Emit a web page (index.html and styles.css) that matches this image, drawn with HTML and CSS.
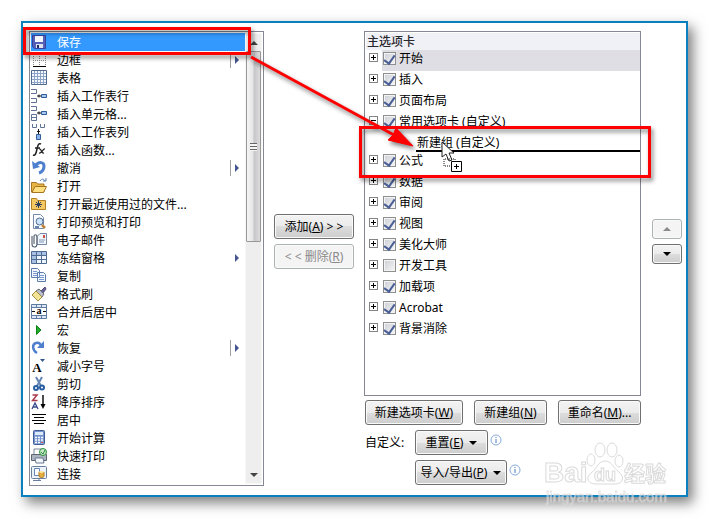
FILE: index.html
```html
<!DOCTYPE html>
<html lang="zh-CN">
  <head>
    <meta charset="UTF-8" />
    <meta name="viewport" content="width=device-width, initial-scale=1.0" />
    <title>自定义功能区</title>
    <link rel="stylesheet" href="styles.css">
  </head>
  <body>
    <main class="dialog">
      <div class="commands">
        <ul class="command-list">
          <li class="selected">
            <svg class="icon" viewBox="0 0 16 16"><path d="M1.500 1.500h13v13h-11l-2-2z" fill="#5460b8" stroke="#38429a"/><path d="M4 2h8v6H4z" fill="#f5f7ff"/><path d="M5 10h7v4H5z" fill="#dfe3ee"/><path d="M6 11h2v3H6z" fill="#222a60"/></svg>
            保存
          </li>
          <li>
            <svg class="icon" viewBox="0 0 16 16"><path d="M2 2.500h13M2 8.500h13M2.500 2v12M8.500 2v12M14.500 2v12" stroke="#8b8b8b" stroke-dasharray="1 1" fill="none"/><path d="M2 14.500h13" stroke="#000"/></svg>
            边框<span class="more split"></span>
          </li>
          <li>
            <svg class="icon" viewBox="0 0 16 16"><path d="M.5.5h15v14H.5z" fill="#f4f8ff" stroke="#50698f"/><path d="M1 3.500h14M1 6.500h14M1 9.500h14M1 12.500h14M3.500 1v13M6.500 1v13M9.500 1v13M12.500 1v13" stroke="#8da4c6"/></svg>
            表格
          </li>
          <li>
            <svg class="icon" viewBox="0 0 16 16"><path d="M0 1.500h5.500v4H0M0 10.500h5.500v4H0" fill="#fff" stroke="#607595"/><path d="M6 8h4M8 6.500v3" stroke="#111"/><path d="M10.500 6.500h5v3h-5z" fill="#a8c8f2" stroke="#315d9b"/></svg>
            插入工作表行
          </li>
          <li>
            <svg class="icon" viewBox="0 0 16 16"><path d="M0 .5h5.500v4H0M.5 8.500h5v6h-5zM.5 11.500h5" fill="#fff" stroke="#607595"/><path d="M6 7h4M8 5.500v3" stroke="#111"/><path d="M10.500 5.500h5v3h-5z" fill="#a8c8f2" stroke="#315d9b"/></svg>
            插入单元格...
          </li>
          <li>
            <svg class="icon" viewBox="0 0 16 16"><path d="M1.500 0v3.500h4V0M9.500 0v3.500h4V0" fill="#fff" stroke="#607595"/><path d="M7.500 5v5M6 7.500h3" stroke="#111"/><path d="M5.500 10.500h4v5h-4z" fill="#8bb3ea" stroke="#315d9b"/></svg>
            插入工作表列
          </li>
          <li>
            <svg class="icon" viewBox="0 0 16 16"><path d="M2 13c2 1 3-1 4-6s2-6 4-5M4 6h5" fill="none" stroke="#222" stroke-width="1.500"/><path d="M8 7c3-1 2 5 5 4M14 7c-2-1-3 5-6 4" fill="none" stroke="#222" stroke-width="1.300"/></svg>
            插入函数...
          </li>
          <li>
            <svg class="icon" viewBox="0 0 16 16"><path d="M4 6c4-5 9-4 9 0 0 3-2 6-5 7" fill="none" stroke="#4d7fce" stroke-width="3"/><path d="M1 1l1 8 7-2z" fill="#4d7fce"/></svg>
            撤消<span class="more split"></span>
          </li>
          <li>
            <svg class="icon" viewBox="0 0 16 16"><path d="M.5 14V4.500h5l1 1.500H13v8z" fill="#e9b645" stroke="#a77522"/><path d="M1 14.500l3-6h11.500l-3 6z" fill="#ffdf80" stroke="#a77522"/><path d="M9 3c2-3 4-2 5 0M12 3h3V0" fill="none" stroke="#587eae"/></svg>
            打开
          </li>
          <li>
            <svg class="icon" viewBox="0 0 16 16"><path d="M.5 13.500V2.500h5l1 2h8v9z" fill="#f5c961" stroke="#b38024"/><path d="M7.500 5v7M4 8.500h7M5 6l5 5M10 6l-5 5" stroke="#2c3d61"/></svg>
            打开最近使用过的文件...
          </li>
          <li>
            <svg class="icon" viewBox="0 0 16 16"><path d="M2.500.5h7l3 3v11h-10z" fill="#fbfcff" stroke="#7789a8"/><circle cx="8.500" cy="7.500" r="3.500" fill="#cae3f8" stroke="#516b91"/><path d="M11 11l3 3" stroke="#bb833c" stroke-width="2.500"/><path d="M4 12h4v2H4z" fill="#6685b2"/></svg>
            打印预览和打印
          </li>
          <li>
            <svg class="icon" viewBox="0 0 16 16"><path d="M6 4.500l3-3h6.500v11H6z" fill="#f0f5fc" stroke="#7487a6"/><path d="M8 8h6M8 10h5" stroke="#8297b5"/><path d="M12 3h2v3h-2z" fill="#cf5240"/><path d="M1 4v8c0 4 5 4 5 0V5c0-3-3-3-3 0v7" fill="none" stroke="#5c6879" stroke-width="1.200"/></svg>
            电子邮件
          </li>
          <li>
            <svg class="icon" viewBox="0 0 16 16"><path d="M.5 1.500h15v12H.5z" fill="#eff5ff" stroke="#506b91"/><path d="M1 2h4v11H1zM5 2h10v3H5z" fill="#a7c1e4"/><path d="M1 5.500h14M1 9.500h14M5.500 1v12M10.500 1v12" stroke="#506b91"/></svg>
            冻结窗格<span class="more"></span>
          </li>
          <li>
            <svg class="icon" viewBox="0 0 16 16"><path d="M.5.5h6l2 2v7h-8zM6.500 4.500h6l2 2v7h-8z" fill="#f1f6ff" stroke="#5c7caf"/><path d="M2 3.500h4M2 5.500h4M2 7.500h4M8 7.500h5M8 9.500h5M8 11.500h5" stroke="#7b9acb"/></svg>
            复制
          </li>
          <li>
            <svg class="icon" viewBox="0 0 16 16"><path d="M10 5l4-4 1 2-3 4z" fill="#6b619c" stroke="#514b77"/><path d="M8 3l5 5-2 3-6-6z" fill="#b8bdca" stroke="#686c79"/><path d="M5 5l6 6-4 4-6-6z" fill="#f2e494" stroke="#a28d43"/></svg>
            格式刷
          </li>
          <li>
            <svg class="icon" viewBox="0 0 16 16"><path d="M.5.5h15v14H.5zM.5 3.500h15M.5 11.500h15M5.500 0v3M10.500 0v3M5.500 12v3M10.500 12v3" fill="#dce9fa" stroke="#607aa0"/><path d="M1 4h14v7H1z" fill="#fff"/><path d="M1 7.500h3M12 7.500h3" stroke="#111"/><text x="8" y="10" text-anchor="middle" class="glyph">a</text></svg>
            合并后居中
          </li>
          <li>
            <svg class="icon" viewBox="0 0 16 16"><path d="M5.500 3.500v9l4.500-4.500z" fill="#20ae2a" stroke="#108018"/></svg>
            宏
          </li>
          <li>
            <svg class="icon" viewBox="0 0 16 16"><path d="M6 13C1 10 1 4 5 3c3-1 5 1 5 4" fill="none" stroke="#4d7fce" stroke-width="2.500"/><path d="M6 8h7V1z" fill="#4d7fce"/></svg>
            恢复<span class="more split"></span>
          </li>
          <li>
            <svg class="icon" viewBox="0 0 16 16"><text x="6" y="14" text-anchor="middle" class="glyph large">A</text><path d="M9 1h5l-2.500 3z" fill="#31558d"/></svg>
            减小字号
          </li>
          <li>
            <svg class="icon" viewBox="0 0 16 16"><path d="M5 1l5 9M11 1L6 10" stroke="#6586b4" stroke-width="2"/><circle cx="5" cy="12" r="2" fill="none" stroke="#285da2" stroke-width="2"/><circle cx="11" cy="11.500" r="2" fill="none" stroke="#285da2" stroke-width="2"/></svg>
            剪切
          </li>
          <li>
            <svg class="icon" viewBox="0 0 16 16"><path d="M1.500 1h4.500L1.500 6.500h5" fill="none" stroke="#a9384c" stroke-width="1.500"/><path d="M1 15l3-6 3 6M2 13h4" fill="none" stroke="#394c8e" stroke-width="1.300"/><path d="M12 1v11" stroke="#111" stroke-width="1.500"/><path d="M9.500 10h5l-2.500 5z"/></svg>
            降序排序
          </li>
          <li>
            <svg class="icon" viewBox="0 0 16 16"><path d="M1 2.500h14M3 5.500h10M1 8.500h14M3 11.500h10" stroke="#000"/></svg>
            居中
          </li>
          <li>
            <svg class="icon" viewBox="0 0 16 16"><rect x="2.500" y=".5" width="11" height="14" rx="1" fill="#7594ce" stroke="#405d98"/><path d="M4 2h8v3H4z" fill="#dceafa"/><path d="M4 7.500h8M4 10h8M4 12.500h8" stroke="#fff" stroke-width="1.500" stroke-dasharray="2 1"/><path d="M10 12h2v1h-2z" fill="#d34f43"/></svg>
            开始计算
          </li>
          <li>
            <svg class="icon" viewBox="0 0 16 16"><path d="M3 1h8v6H3z" fill="#fff" stroke="#7b8798"/><path d="M.5 6.500h15v6H.5z" fill="#aab3be" stroke="#5c6672"/><path d="M4 10h8l1 5H5z" fill="#f6f8fc" stroke="#657894"/><circle cx="12" cy="4" r="3.500" fill="#c5eac5" stroke="#2d8c3d"/><path d="M10 4l2 2 2-4" fill="none" stroke="#27883b"/></svg>
            快速打印
          </li>
          <li>
            <svg class="icon" viewBox="0 0 16 16"><rect x=".5" y=".5" width="15" height="12" rx="1" fill="#edf3fb" stroke="#687f9f"/><path d="M3.500 2.500h5v7h-5z" fill="#fff" stroke="#6787b9"/><path d="M8 6v4c0 2 5 2 5 0V6" fill="#e5ae40" stroke="#ad7b22"/><ellipse cx="10.500" cy="6" rx="2.500" ry="1" fill="#ffe29a"/><path d="M2 14.500h8M8 12v3" stroke="#687f9f"/></svg>
            连接
          </li>
        </ul>
        <div class="scrollbar">
          <span class="arrow up"></span>
          <span class="thumb"><i></i></span>
          <span class="arrow down"></span>
        </div>
      </div>

      <div class="transfer">
        <button type="button">添加(<u>A</u>) &gt; &gt;</button>
        <button type="button" disabled>&lt; &lt; 删除(<u>R</u>)</button>
      </div>

      <div class="ribbon">
        <div class="tree">
          <h2>主选项卡</h2>
          <ul>
            <li class="current"><span class="toggle"></span><label><input type="checkbox" checked />开始</label></li>
            <li><span class="toggle"></span><label><input type="checkbox" checked />插入</label></li>
            <li><span class="toggle"></span><label><input type="checkbox" checked />页面布局</label></li>
            <li><span class="toggle open"></span><label><input type="checkbox" checked />常用选项卡 (自定义)</label></li>
            <li class="group">新建组 (自定义)</li>
            <li><span class="toggle"></span><label><input type="checkbox" checked />公式</label></li>
            <li><span class="toggle"></span><label><input type="checkbox" checked />数据</label></li>
            <li><span class="toggle"></span><label><input type="checkbox" checked />审阅</label></li>
            <li><span class="toggle"></span><label><input type="checkbox" checked />视图</label></li>
            <li><span class="toggle"></span><label><input type="checkbox" checked />美化大师</label></li>
            <li><span class="toggle"></span><label><input type="checkbox" />开发工具</label></li>
            <li><span class="toggle"></span><label><input type="checkbox" checked />加载项</label></li>
            <li><span class="toggle"></span><label><input type="checkbox" checked />Acrobat</label></li>
            <li><span class="toggle"></span><label><input type="checkbox" checked />背景消除</label></li>
          </ul>
        </div>
        <div class="tab-buttons">
          <button type="button" class="wide">新建选项卡(<u>W</u>)</button>
          <button type="button">新建组(<u>N</u>)</button>
          <button type="button" class="medium">重命名(<u>M</u>)...</button>
        </div>
        <div class="custom">
          <span class="custom-label">自定义:</span>
          <div class="custom-row">
            <button type="button"><span>重置(<u>E</u>)</span><span class="caret"></span></button>
            <svg class="info" viewBox="0 0 12 12"><circle cx="6" cy="6" r="5" fill="#fff" stroke="#86a9dc"/><path d="M6 5v4M6 3v1" stroke="#4778bd"/></svg>
          </div>
          <div class="custom-row second">
            <button type="button" class="export"><span>导入/导出(<u>P</u>)</span><span class="caret"></span></button>
            <svg class="info" viewBox="0 0 12 12"><circle cx="6" cy="6" r="5" fill="#fff" stroke="#86a9dc"/><path d="M6 5v4M6 3v1" stroke="#4778bd"/></svg>
          </div>
        </div>
      </div>

      <div class="order">
        <button type="button" aria-label="上移" disabled><span class="caret up"></span></button>
        <button type="button" aria-label="下移"><span class="caret"></span></button>
      </div>

      <!-- drag hint: source, arrow and drop target -->
      <svg class="hint" width="640" height="170" viewBox="0 0 640 170">
        <g class="hint-lines">
          <rect x="1.500" y="5.500" width="225" height="25" />
          <rect x="337.500" y="104.500" width="289" height="49" />
          <path d="M228 34L371 112" />
          <path class="head" d="M390 123L365 117L370 112L373 105z" />
        </g>
        <path d="M419 119v15l4-3 3 7 3-1-3-7h5z" fill="#fff" stroke="#222" />
        <path d="M421 143v-7h11v7h-11" fill="none" stroke="#111" stroke-dasharray="1 1" />
        <path d="M428.500 138.500h10v10h-10z" fill="#fff" stroke="#000" />
        <path d="M431 143.500h5M433.500 141v5" stroke="#000" />
      </svg>

      <svg class="watermark" width="130" height="67" viewBox="0 0 130 67">
        <g class="mark">
          <text x="1" y="41" class="brand">Bai</text>
          <path d="M62 20c-7 0-8 8-14 12-6 5-3 11 5 11h19c8 0 10-7 4-12-6-4-7-11-14-11z" />
          <ellipse cx="48" cy="19" rx="4" ry="6" />
          <ellipse cx="57" cy="9" rx="5" ry="7" />
          <ellipse cx="69" cy="9" rx="5" ry="7" />
          <ellipse cx="76" cy="20" rx="4" ry="6" />
          <text x="51" y="40" class="du">du</text>
          <text x="81" y="40" class="cn">经验</text>
          <text x="3" y="61" class="site">jingyan.baidu.com</text>
        </g>
      </svg>
    </main>
  </body>
</html>
```
FILE: styles.css
```css
* {
  box-sizing: border-box;
}
body {
  margin: 0;
  padding: 21px;
  background-color: white;
  color: black;
  font-family: "Noto Sans", "Noto Sans CJK SC", sans-serif;
  font-size: 12px;
  line-height: 18px;
}
ul {
  list-style: none;
  margin: 0;
  padding: 0;
}
.dialog {
  position: relative;
  display: flex;
  gap: 10px;
  padding: 8px 4px 9px 6px;
  background-color: white;
  border: 2px solid #0a80c0;
  box-shadow: 5px 6px 12px rgba(0, 0, 0, 0.5);
}

/* command list */
.commands {
  display: flex;
  width: 235px;
  padding: 1px;
  border: 1px solid #858793;
}
.command-list {
  flex: 1;
  padding-bottom: 1px;
}
.command-list li {
  display: flex;
  gap: 10px;
  height: 18px;
  line-height: 20px;
}
.command-list .selected {
  background-color: #3399ff;
  color: white;
}
.icon {
  width: 16px;
  height: 16px;
  margin-top: 1px;
}
.glyph {
  font-family: "Liberation Serif", serif;
  font-size: 10px;
  font-weight: bold;
}
.glyph.large {
  font-size: 13px;
}
.more {
  display: flex;
  align-items: center;
  width: 15px;
  height: 16px;
  margin: 1px 0 0 auto;
  padding-left: 4px;
  border-left: 1px solid transparent;
}
.more.split {
  border-color: #a0a0a0;
}
.more::before {
  content: "";
  border: 4px solid transparent;
  border-left-color: #44558f;
  border-right: 0;
}
.scrollbar {
  display: flex;
  flex-direction: column;
  align-items: center;
  width: 17px;
  background-color: #eeeeee;
  border: 1px solid #f7f7f7;
}
.arrow {
  display: flex;
  align-items: center;
  justify-content: center;
  height: 17px;
}
.arrow::before {
  content: "";
  border: 4px solid transparent;
}
.arrow.up::before {
  border-top: 0;
  border-bottom-color: #444444;
}
.arrow.down {
  margin-top: auto;
}
.arrow.down::before {
  border-bottom: 0;
  border-top-color: #444444;
}
.thumb {
  display: flex;
  align-items: center;
  justify-content: center;
  width: 15px;
  height: 191px;
  border: 1px solid #979797;
  border-radius: 1px;
  background: linear-gradient(to right, #f5f5f5, #e5e5e8 45%, #c6c6ca 55%, #dcdcdc);
}
.thumb i {
  width: 7px;
  height: 8px;
  background: repeating-linear-gradient(#666666 0 1px, #f5f5f5 1px 3px);
}

/* buttons */
button {
  display: flex;
  align-items: center;
  justify-content: center;
  min-width: 73px;
  height: 25px;
  padding: 0;
  border: 1px solid #707070;
  border-radius: 3px;
  background: linear-gradient(#f3f3f3, #ebebeb 50%, #dddddd 50%, #cdcdcd);
  box-shadow: inset 0 0 0 1px #fafafa;
  color: black;
  font: inherit;
  white-space: pre;
}
button:disabled {
  border-color: #adb2b5;
  background: #f4f4f4;
  color: #8a8a8a;
}
.wide {
  min-width: 98px;
}
.medium {
  min-width: 83px;
}
.caret {
  border: 4px solid transparent;
  border-top-color: black;
  border-bottom: 0;
}
.caret.up {
  border-top: 0;
  border-bottom: 4px solid #8a8a8a;
}
.transfer,
.order {
  display: flex;
  flex-direction: column;
  justify-content: center;
  gap: 5px;
  padding-bottom: 34px;
}
.transfer {
  width: 80px;
}
.order {
  width: 30px;
  margin-left: 1px;
}
.order button {
  min-width: 30px;
  height: 20px;
}

/* ribbon tabs */
.ribbon {
  display: flex;
  flex: 1;
  flex-direction: column;
  min-width: 277px;
  padding-bottom: 1px;
}
.tree {
  flex: 1;
  padding-top: 1px;
  border: 1px solid #858793;
}
.tree h2 {
  margin: 0 0 0 1px;
  padding-left: 1px;
  background-color: #f0f1f6;
  color: #28282f;
  font-size: 12px;
  font-weight: 500;
  line-height: 17px;
}
.tree li {
  display: flex;
  height: 21px;
  padding-left: 4px;
  line-height: 17px;
}
.tree label {
  display: flex;
  flex: 1;
  gap: 3px;
  margin-left: 4px;
  padding-left: 1px;
}
.tree .current label {
  background-color: #dfdee4;
}
.tree .group {
  height: 18px;
  margin-left: 51px;
  padding-left: 1px;
  border-bottom: 2px solid black;
}
.toggle {
  width: 9px;
  height: 9px;
  margin-top: 3px;
  border: 1px solid #848484;
  background: linear-gradient(black, black) center / 5px 1px no-repeat,
    linear-gradient(black, black) center / 1px 5px no-repeat;
}
.toggle.open {
  background: linear-gradient(black, black) center / 5px 1px no-repeat;
}
.tree input {
  appearance: none;
  display: flex;
  justify-content: center;
  width: 13px;
  height: 13px;
  margin: 2px 0 0;
  border: 1px solid #8e8f8f;
  background: linear-gradient(135deg, #cbcfd5, #f6f6f6);
  box-shadow: inset 0 0 0 1px #f4f4f4;
}
.tree input:checked::before {
  content: "";
  width: 5px;
  height: 9px;
  border: solid #4a5f97;
  border-width: 0 2px 2px 0;
  transform: rotate(35deg);
}
.tab-buttons {
  display: flex;
  justify-content: space-between;
  margin: 4px 0 5px 1px;
}
.custom {
  display: grid;
  grid-template-columns: 50px 1fr;
  gap: 5px 0;
  margin-left: 1px;
}
.custom-label {
  line-height: 25px;
}
.custom-row {
  display: flex;
  gap: 2px;
}
.custom-row.second {
  grid-column: 2;
}
.custom-row button {
  gap: 6px;
}
.custom-row .export {
  min-width: 92px;
}
.info {
  width: 12px;
  height: 12px;
  margin-top: 4px;
}

/* overlays */
.hint {
  position: absolute;
  top: 0;
  left: 0;
  overflow: visible;
  pointer-events: none;
}
.hint-lines {
  fill: none;
  stroke: red;
  stroke-width: 3px;
  filter: drop-shadow(2px 3px 2px rgba(0, 0, 0, 0.5));
}
.hint-lines .head {
  fill: red;
  stroke-width: 1px;
}
.watermark {
  position: absolute;
  right: 13px;
  bottom: -13px;
  pointer-events: none;
}
.mark {
  fill: white;
  stroke: #d6d6d6;
  stroke-width: 1px;
  font-family: "Liberation Sans", "Noto Sans CJK SC", sans-serif;
  opacity: 0.9;
}
.brand {
  font-size: 28px;
  font-weight: bold;
}
.du {
  font-size: 18px;
  font-weight: bold;
}
.cn {
  font-size: 21px;
  font-weight: bold;
}
.site {
  font-size: 15px;
  opacity: 0.7;
}
```
